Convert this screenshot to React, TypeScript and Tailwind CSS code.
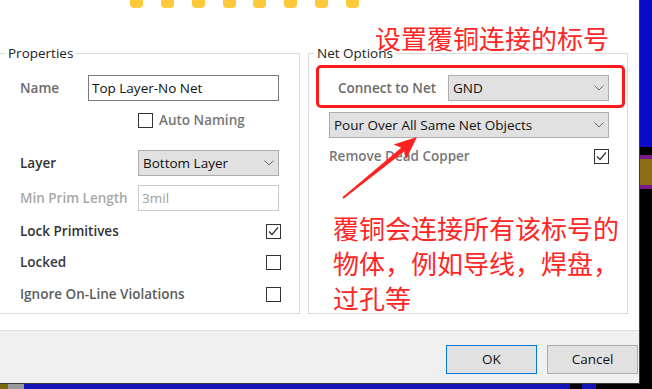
import React from "react";

const yellowDots = [0, 1, 2, 3, 4, 5, 6, 7];

function Chevron() {
  return (
    <svg width="10" height="6" viewBox="0 0 10 6" className="shrink-0">
      <polyline points="0.5,0.5 5,5 9.5,0.5" fill="none" stroke="#6a6a6a" strokeWidth="1" />
    </svg>
  );
}

function CheckBox({ checked }: { checked?: boolean }) {
  return (
    <div className="w-[15px] h-[15px] border border-[#333333] bg-white shrink-0 flex items-center justify-center">
      {checked && (
        <svg width="13" height="13" viewBox="0 0 13 13">
          <polyline points="2,6.5 5,9.5 11,2.5" fill="none" stroke="#333333" strokeWidth="1.2" />
        </svg>
      )}
    </div>
  );
}

function Select({ value, width }: { value: string; width: string }) {
  return (
    <div
      className={`${width} h-[26px] bg-[#e1e1e1] border border-[#adadad] flex items-center justify-between pl-[4px] pr-[4px] text-[13.5px] font-medium text-[#111]`}
    >
      <span>{value}</span>
      <Chevron />
    </div>
  );
}

function CheckRow({ label, checked, color, mt }: { label: string; checked?: boolean; color: string; mt: string }) {
  return (
    <div className={`h-[15px] flex items-center justify-between ${mt}`}>
      <span className={`text-[13.5px] font-semibold ${color}`}>{label}</span>
      <CheckBox checked={checked} />
    </div>
  );
}

function Arrow() {
  // red callout arrow: tail bottom-left, tip up at the "Pour Over" select
  return (
    <svg className="absolute left-0 top-0 pointer-events-none" width="640" height="330" viewBox="0 0 640 330">
      <polygon
        points="417,137 406,159.5 404.2,151.6 343.6,198.8 342.4,197.2 401.2,147.8 393.6,144.5"
        fill="#ff2222"
      />
    </svg>
  );
}

export default function App() {
  return (
    <div className="w-[652px] h-[389px] overflow-hidden flex flex-col bg-black font-['Open_Sans','Liberation_Sans',sans-serif]">
      <div className="flex h-[384px]">
        {/* dialog */}
        <div className="w-[640px] shrink-0 flex flex-col bg-white border-r border-b border-[#3c3c3c]">
          <div className="h-[330px] relative">
            <div className="flex gap-[17.86px] pl-[130px]">
              {yellowDots.map((d) => (
                <div key={d} className="w-[13px] h-[8px] rounded-b-[4px] bg-[#ffc93c]" />
              ))}
            </div>

            <div className="flex gap-[8px] mt-[45px] ml-[-2px]">
              {/* Properties */}
              <div className="relative w-[302px] h-[261px] border border-[#dcdcdc] pl-[21px] pr-[18px]">
                <span className="absolute left-[6px] top-[-10px] px-[3px] bg-white leading-[18px] text-[13.5px] text-[#222]">
                  Properties
                </span>
                <div className="h-[26px] flex items-center mt-[21px]">
                  <span className="w-[68px] text-[13.5px] font-semibold text-[#6b6b6b]">Name</span>
                  <div className="w-[191px] h-[26px] border border-[#7a7a7a] flex items-center pl-[3px] text-[13.5px] font-medium text-[#111]">
                    Top Layer-No Net
                  </div>
                </div>
                <div className="h-[15px] flex items-center gap-[6px] mt-[12px] ml-[118px]">
                  <CheckBox />
                  <span className="text-[13.5px] font-semibold text-[#777]">Auto Naming</span>
                </div>
                <div className="h-[26px] flex items-center mt-[22px]">
                  <span className="w-[118px] text-[13.5px] font-semibold text-[#333]">Layer</span>
                  <Select value="Bottom Layer" width="w-[141px]" />
                </div>
                <div className="h-[26px] flex items-center mt-[9px]">
                  <span className="w-[118px] text-[13.5px] font-semibold text-[#a8a8a8] whitespace-nowrap">Min Prim Length</span>
                  <div className="w-[141px] h-[26px] border border-[#cccccc] flex items-center pl-[3px] text-[13.5px] text-[#a0a0a0]">
                    3mil
                  </div>
                </div>
                <CheckRow label="Lock Primitives" checked color="text-[#333]" mt="mt-[13px]" />
                <CheckRow label="Locked" color="text-[#3a3a3a]" mt="mt-[16px]" />
                <CheckRow label="Ignore On-Line Violations" color="text-[#5c5c5c]" mt="mt-[17px]" />
              </div>

              {/* Net Options */}
              <div className="relative w-[320px] h-[261px] border border-[#dcdcdc] pl-[20px] pr-[18px]">
                <span className="absolute left-[5px] top-[-10px] px-[3px] bg-white leading-[18px] text-[13.5px] text-[#222]">
                  Net Options
                </span>
                <div className="h-[26px] flex items-center mt-[21px]">
                  <span className="w-[119px] pl-[9px] text-[13.5px] font-semibold text-[#6b6b6b] whitespace-nowrap">Connect to Net</span>
                  <Select value="GND" width="w-[161px]" />
                </div>
                <div className="mt-[11px]">
                  <Select value="Pour Over All Same Net Objects" width="w-[280px]" />
                </div>
                <CheckRow label="Remove Dead Copper" checked color="text-[#777]" mt="mt-[11px]" />
                <div className="absolute left-[7px] top-[11px] w-[309px] h-[43px] border-[3px] border-[#ff1b1b] rounded-[5px]" />
              </div>
            </div>

            <Arrow />
            <div className="absolute left-[375px] top-[25px] text-[26px] leading-none text-[#ff2626] whitespace-nowrap font-['Noto_Sans_CJK_SC',sans-serif]">
              设置覆铜连接的标号
            </div>
            <div className="absolute left-[333px] top-[210px] text-[26px] leading-[35px] text-[#ff2626] whitespace-nowrap font-['Noto_Sans_CJK_SC',sans-serif]">
              覆铜会连接所有该标号的
              <br />
              物体，例如导线，焊盘，
              <br />
              过孔等
            </div>
          </div>

          <div className="h-px bg-[#dfdfdf]" />
          <div className="flex-1 bg-[#f0f0f0] flex justify-end items-start gap-[10px] pt-[14px] pr-[1px]">
            <button className="w-[91px] h-[29px] bg-[#e1e1e1] border border-[#0078d7] text-[13.5px] text-[#111]">OK</button>
            <button className="w-[91px] h-[29px] bg-[#e1e1e1] border border-[#adadad] text-[13.5px] text-[#111]">Cancel</button>
          </div>
        </div>

        {/* background windows on the right */}
        <div className="flex-1 flex flex-col">
          <div className="h-[147px] bg-[#0a0ac8]" />
          <div className="h-[8px] bg-black" />
          <div className="h-[4px] bg-[#7a1a8a]" />
          <div className="h-[26px] bg-[#8a6d14]" />
          <div className="h-[4px] bg-[#7a1a8a]" />
          <div className="flex-1 bg-black" />
        </div>
      </div>

      {/* taskbar strip */}
      <div className="h-[5px] flex">
        <div className="w-[8px] bg-[#7a6a10]" />
        <div className="w-[16px] bg-[#9a9a9a]" />
        <div className="w-[546px] bg-[#1414b4]" />
        <div className="w-[12px] bg-black" />
        <div className="w-[14px] bg-[#1414b4]" />
        <div className="flex-1 bg-black" />
      </div>
    </div>
  );
}
